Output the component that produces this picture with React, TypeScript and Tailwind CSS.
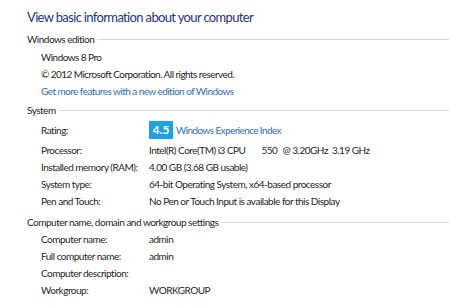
import React from "react";

const font = { fontFamily: 'Lato, "Open Sans", sans-serif' };

function Heading({ children }: { children: React.ReactNode }) {
  return (
    <div className="flex items-center h-[17px] pl-[27px] text-[10px] tracking-[-0.5px] text-[#1e1e1e]">
      <span className="whitespace-nowrap">{children}</span>
      <div className="flex-1 h-px bg-[#d8d8d8] ml-[3px]" />
    </div>
  );
}

function Row({ label, children, tall }: { label: string; children?: React.ReactNode; tall?: boolean }) {
  return (
    <div className={`flex items-center pl-[41px] text-[10px] tracking-[-0.5px] text-[#1e1e1e] ${tall ? "h-[22px]" : "h-[17px]"}`}>
      <span className="w-[108px] shrink-0 whitespace-nowrap">{label}</span>
      <span className="whitespace-nowrap flex items-center">{children}</span>
    </div>
  );
}

export default function App() {
  return (
    <div className="w-[449px] h-[305px] bg-white overflow-hidden pt-[8px]" style={font}>
      <h1 className="pl-[27px] h-[18px] leading-[18px] text-[13px] tracking-[-0.65px] text-[#1e3287]">
        View basic information about your computer
      </h1>

      <div className="mt-[5px]">
        <Heading>Windows edition</Heading>
        <div className="pl-[41px] text-[10px] tracking-[-0.55px] text-[#1e1e1e] mt-[1px]">
          <div className="h-[17px] leading-[17px]">Windows 8 Pro</div>
          <div className="h-[17px] leading-[17px]">© 2012 Microsoft Corporation. All rights reserved.</div>
          <div className="h-[17px] leading-[17px] text-[#2f6db5]">Get more features with a new edition of Windows</div>
        </div>
      </div>

      <div className="mt-[2px]">
        <Heading>System</Heading>
        <Row label="Rating:" tall>
          <span className="inline-flex items-center justify-center w-[24px] h-[18px] bg-[#1ba3df] text-white font-bold text-[12px] tracking-normal">
            4.5
          </span>
          <span className="ml-[3px] text-[#2f6db5] tracking-[-0.6px]">Windows Experience Index</span>
        </Row>
        <div className="mt-[1px]">
          <Row label="Processor:">
            <span>Intel(R) Core(TM) i3 CPU</span>
            <span className="ml-[16px]">550</span>
            <span className="ml-[5px]">@ 3.20GHz</span>
            <span className="ml-[4px]">3.19 GHz</span>
          </Row>
        </div>
        <Row label="Installed memory (RAM):">4.00 GB (3.68 GB usable)</Row>
        <Row label="System type:">64-bit Operating System, x64-based processor</Row>
        <Row label="Pen and Touch:">No Pen or Touch Input is available for this Display</Row>
      </div>

      <div className="mt-[4px]">
        <Heading>Computer name, domain and workgroup settings</Heading>
        <Row label="Computer name:">admin</Row>
        <Row label="Full computer name:">admin</Row>
        <Row label="Computer description:" />
        <Row label="Workgroup:">WORKGROUP</Row>
      </div>
    </div>
  );
}
